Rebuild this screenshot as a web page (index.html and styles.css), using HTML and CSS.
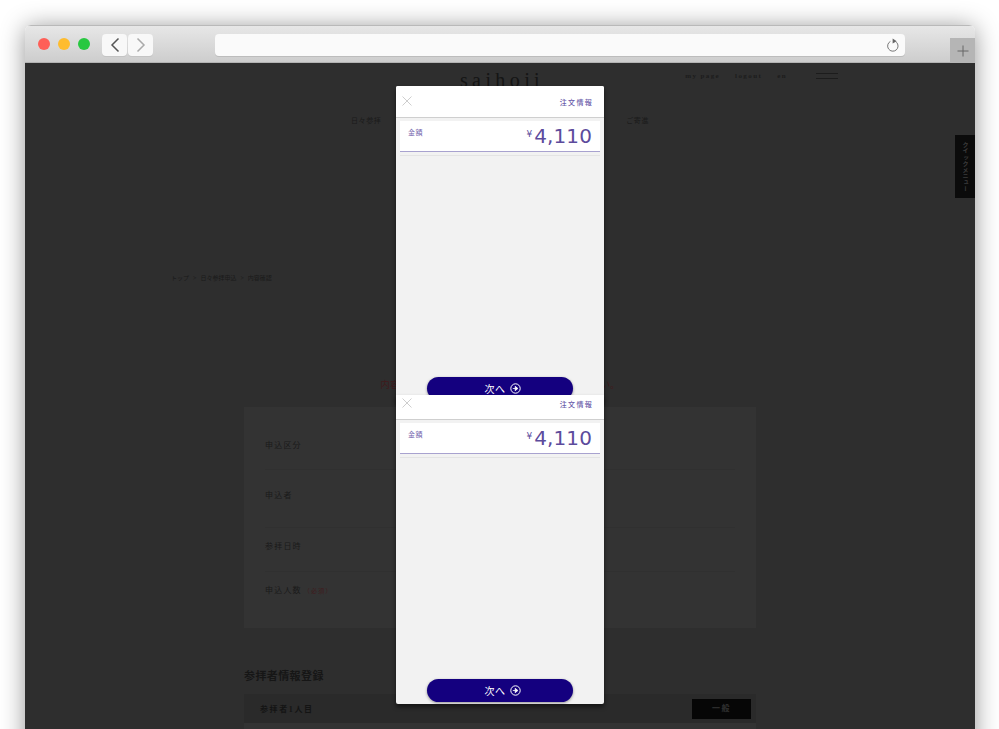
FILE: index.html
```html
<!DOCTYPE html>
<html lang="ja">
<head>
<meta charset="utf-8">
<title>内容確認</title>
<link rel="stylesheet" href="styles.css">
</head>
<body>
<div class="window">
  <div class="toolbar">
    <div class="lights">
      <span class="light light-red"></span>
      <span class="light light-yellow"></span>
      <span class="light light-green"></span>
    </div>
    <div class="navs">
      <span class="navbtn"><svg width="12" height="16" viewBox="0 0 12 16"><path d="M9.5 1.5 L3 8 L9.5 14.5" fill="none" stroke="#555" stroke-width="1.5"/></svg></span>
      <span class="navbtn"><svg width="12" height="16" viewBox="0 0 12 16"><path d="M2.5 1.5 L9 8 L2.5 14.5" fill="none" stroke="#aaa" stroke-width="1.5"/></svg></span>
    </div>
    <div class="urlbar">
      <svg width="14" height="15" viewBox="0 0 14 15"><path d="M10.4 4.2 A5.2 5.2 0 1 1 4.4 3.4" fill="none" stroke="#777" stroke-width="1"/><path d="M6.6 0.6 L10.8 3.2 L6.6 5.6 Z" fill="#666"/></svg>
    </div>
    <span class="newtab"><svg width="12" height="12" viewBox="0 0 12 12"><path d="M6 0.5 V11.5 M0.5 6 H11.5" stroke="#666" stroke-width="1"/></svg></span>
  </div>
  <div class="page">
    <header class="top">
      <div></div>
      <div class="logo">saihoji</div>
      <div class="usernav">
        <span>my page</span><span>logout</span><span>en</span>
        <span class="burger"></span>
      </div>
    </header>
    <nav class="gnav"><span>日々参拝</span><span>ご寄進</span></nav>
    <a class="quick">クイックメニュー</a>
    <div class="crumbs"><span>トップ</span><span>&gt;</span><span>日々参拝申込</span><span>&gt;</span><span>内容確認</span></div>
    <p class="notice">内容をご確認の上、次へ進むボタンを押してください。</p>
    <section class="panel">
      <div class="row row-a"><span>申込区分</span></div>
      <div class="row row-b"><span>申込者</span></div>
      <div class="row row-c"><span>参拝日時</span></div>
      <div class="row row-d"><span>申込人数</span><em>（必須）</em></div>
    </section>
    <h2 class="sect">参拝者情報登録</h2>
    <div class="person"><span>参拝者1人目</span><b class="kind">一般</b></div>
    <div class="person-body"></div>
  </div>
</div>

<div class="modal modal-first">
  <div class="modal-inner">
    <div class="m-head">
      <span class="m-close"><svg width="10" height="10" viewBox="0 0 10 10"><path d="M0.5 0.5 L9.5 9.5 M9.5 0.5 L0.5 9.5" stroke="#c8c8c8" stroke-width="0.9"/></svg></span>
      <span class="m-title">注文情報</span>
    </div>
    <div class="m-amount">
      <span class="m-label">金額</span>
      <span class="m-price"><small>¥</small>4,110</span>
    </div>
    <div class="m-rule"></div>
    <button class="m-next">次へ<svg width="11" height="11" viewBox="0 0 11 11"><circle cx="5.5" cy="5.5" r="4.7" fill="none" stroke="#fff" stroke-width="1"/><path d="M2.8 5.5 H5.6 M5.2 3.3 L7.9 5.5 L5.2 7.7 Z" fill="#fff" stroke="#fff" stroke-width="0.8"/></svg></button>
  </div>
</div>
<div class="modal modal-second">
  <div class="modal-inner">
    <div class="m-head">
      <span class="m-close"><svg width="10" height="10" viewBox="0 0 10 10"><path d="M0.5 0.5 L9.5 9.5 M9.5 0.5 L0.5 9.5" stroke="#c8c8c8" stroke-width="0.9"/></svg></span>
      <span class="m-title">注文情報</span>
    </div>
    <div class="m-amount">
      <span class="m-label">金額</span>
      <span class="m-price"><small>¥</small>4,110</span>
    </div>
    <div class="m-rule"></div>
    <button class="m-next">次へ<svg width="11" height="11" viewBox="0 0 11 11"><circle cx="5.5" cy="5.5" r="4.7" fill="none" stroke="#fff" stroke-width="1"/><path d="M2.8 5.5 H5.6 M5.2 3.3 L7.9 5.5 L5.2 7.7 Z" fill="#fff" stroke="#fff" stroke-width="0.8"/></svg></button>
  </div>
</div>
</body>
</html>
```
FILE: styles.css
```css
* { box-sizing: border-box; }
html, body { height: 729px; margin: 0; overflow: hidden; background: #fff; }
body {
  padding: 25px 24px 0 25px;
  font-family: "Liberation Serif", "Noto Sans CJK JP", serif;
}
.window {
  height: 760px;
  border-radius: 6px 6px 0 0;
  overflow: hidden;
  display: flex;
  flex-direction: column;
  box-shadow: 0 2px 24px rgba(0, 0, 0, .42);
  position: relative;
}
.toolbar {
  height: 38px;
  flex: none;
  display: flex;
  align-items: flex-start;
  padding-top: 8px;
  background: linear-gradient(#e7e7e7, #cdcdcd);
  border-top: 1px solid #b9b9b9;
  border-bottom: 1px solid #b3b3b3;
  position: relative;
}
.lights { display: flex; gap: 8px; margin: 4px 0 0 13px; }
.light { width: 12px; height: 12px; border-radius: 50%; }
.light-red { background: #fe5f57; }
.light-yellow { background: #febc2e; }
.light-green { background: #28c840; }
.navs { display: flex; gap: 1px; margin-left: 12px; }
.navbtn {
  width: 25px;
  height: 22px;
  background: #f8f8f8;
  border-radius: 4px;
  display: flex;
  align-items: center;
  justify-content: center;
  box-shadow: 0 1px 0 #c4c4c4;
}
.urlbar {
  width: 690px;
  height: 22px;
  margin-left: 62px;
  padding-right: 5px;
  background: #fafafa;
  border-radius: 4px;
  display: flex;
  align-items: center;
  justify-content: flex-end;
  box-shadow: 0 1px 0 #bcbcbc;
}
.newtab {
  position: absolute;
  right: 0;
  top: 12px;
  width: 25px;
  height: 25px;
  background: #b5b5b5;
  display: flex;
  align-items: center;
  justify-content: center;
}
.page {
  flex: 1;
  background: #2e2e2e;
  color: #1a1a1a;
  position: relative;
  display: flex;
  flex-direction: column;
}
.top {
  display: grid;
  grid-template-columns: 1fr auto 1fr;
  height: 44px;
}
.logo {
  font-size: 20px;
  letter-spacing: 4.4px;
  padding-left: 4px;
  line-height: 24px;
  margin-top: 5px;
  color: #151515;
}
.usernav {
  display: flex;
  justify-content: flex-end;
  align-items: flex-start;
  gap: 15px;
  padding: 8px 137px 0 0;
  font-size: 7px;
  line-height: 10px;
  letter-spacing: 1.4px;
  font-weight: 700;
  color: #1c1c1c;
}
.burger {
  width: 22px;
  height: 6px;
  margin: 2px 0 0 14px;
  border-top: 1px solid #1c1c1c;
  border-bottom: 1px solid #1c1c1c;
}
.gnav {
  display: flex;
  justify-content: space-between;
  margin: 8px 326px 0;
  font-size: 7px;
  line-height: 12px;
  letter-spacing: 0.6px;
  color: #1a1a1a;
}
.quick {
  position: absolute;
  right: 0;
  top: 72px;
  width: 20px;
  height: 63px;
  background: #0b0b0b;
  color: #3c3c3c;
  font-size: 6px;
  font-weight: 700;
  line-height: 20px;
  letter-spacing: 0.2px;
  writing-mode: vertical-rl;
  text-align: center;
  font-family: "Noto Sans CJK JP", sans-serif;
}
.crumbs {
  display: flex;
  gap: 4px;
  margin: 145px 0 0 146px;
  font-size: 6px;
  line-height: 12px;
  color: #1a1a1a;
}
.notice {
  margin: 94px 0 0;
  text-align: center;
  font-size: 9.6px;
  line-height: 14px;
  color: #401a1c;
  letter-spacing: 0;
}
.panel {
  width: 512px;
  height: 221px;
  margin: 15px auto 0;
  padding: 0 21px;
  background: #333;
}
.row {
  border-bottom: 1px solid #303030;
  font-size: 8px;
  line-height: 12px;
  letter-spacing: 1.2px;
  color: #1a1a1a;
}
.row-a { height: 63px; padding-top: 33px; }
.row-b { height: 58px; padding-top: 20px; }
.row-c { height: 44px; padding-top: 13px; }
.row-d { border-bottom: 0; padding-top: 13px; }
.row em { font-style: normal; font-size: 6px; color: #401a1c; margin-left: 2px; }
.sect {
  width: 512px;
  margin: 41px auto 0;
  font-size: 11px;
  line-height: 14px;
  letter-spacing: 0.4px;
  color: #161616;
}
.person {
  width: 512px;
  height: 29px;
  margin: 11px auto 0;
  padding: 0 5px 0 16px;
  background: #2a2a2a;
  display: flex;
  align-items: center;
  justify-content: space-between;
  font-size: 8px;
  font-weight: 700;
  letter-spacing: 1.6px;
  color: #141414;
}
.kind {
  width: 59px;
  height: 20px;
  background: #060606;
  color: #2c2c2c;
  text-align: center;
  line-height: 20px;
}
.person-body { width: 512px; height: 30px; margin: 0 auto; background: #333; }

.modal {
  position: absolute;
  left: 396px;
  width: 208px;
  overflow: hidden;
  background: #f2f2f2;
  border-radius: 2px;
  box-shadow: 0 3px 4px rgba(0, 0, 0, .5);
}
.modal-first { top: 86px; height: 316px; }
.modal-second { top: 395px; height: 309px; border-radius: 0 0 2px 2px; }
.modal-second .modal-inner { margin-top: -7px; }
.modal-inner {
  height: 316px;
  display: flex;
  flex-direction: column;
  padding-bottom: 2px;
}
.m-head {
  height: 32px;
  flex: none;
  display: flex;
  align-items: center;
  justify-content: space-between;
  padding: 0 11px 0 6px;
  background: #fff;
  border-bottom: 1px solid #cfcfcf;
}
.m-close { width: 10px; height: 10px; display: block; line-height: 0; margin-bottom: 2px; }
.m-title {
  font-size: 7px;
  letter-spacing: 1.3px;
  color: #6a5caa;
  font-family: "Noto Sans CJK JP", sans-serif;
  font-weight: 500;
}
.m-amount {
  height: 31px;
  flex: none;
  margin: 3px 4px 0;
  padding: 0 8px;
  background: #fff;
  border-bottom: 1px solid #a8a2cf;
  display: flex;
  justify-content: space-between;
  color: #5c4b9c;
}
.m-label {
  font-size: 7px;
  line-height: 10px;
  margin-top: 6px;
  letter-spacing: 0.6px;
  color: #7566ae;
  font-family: "Noto Sans CJK JP", sans-serif;
}
.m-price {
  font-family: "DejaVu Sans", sans-serif;
  font-size: 20px;
  line-height: 27px;
  letter-spacing: 0.1px;
}
.m-price small { font-size: 9px; vertical-align: 6px; margin-right: 2px; }
.m-rule {
  height: 1px;
  flex: none;
  margin: 3px 4px 0;
  background: #e4e4e4;
}
.m-next {
  width: 146px;
  height: 23px;
  flex: none;
  margin: auto auto 0;
  border: 0;
  border-radius: 12px;
  background: #14007f;
  color: #fff;
  font-family: "Noto Sans CJK JP", sans-serif;
  font-size: 10px;
  letter-spacing: 0.5px;
  display: flex;
  align-items: center;
  justify-content: center;
  gap: 4px;
  padding: 0 0 0 5px;
  box-shadow: 0 1px 3px rgba(0, 0, 0, .4);
}
```
